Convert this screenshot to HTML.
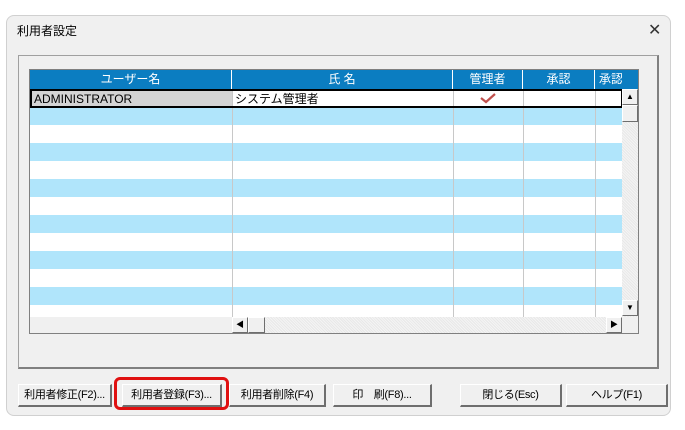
<!DOCTYPE html>
<html><head><meta charset="utf-8"><style>
*{box-sizing:border-box;margin:0;padding:0}
body{width:685px;height:430px;background:#fff;position:relative;overflow:hidden;font-family:"Liberation Sans","Noto Sans CJK JP",sans-serif;font-size:12px;color:#000}
.abs{position:absolute}
.win{left:6px;top:15px;width:665px;height:401px;background:#f0f0f0;border:1px solid #d0d0d0;border-radius:8px}
.panel{left:18px;top:55px;width:641px;height:314px;border-top:1px solid #a0a0a0;border-left:1px solid #a0a0a0;border-right:2px solid #808080;border-bottom:2px solid #808080;background:#f0f0f0}
.grid{left:29px;top:69px;width:610px;height:265px;border:1px solid #808080;background:#f0f0f0;overflow:hidden}
.hdr{top:0;height:19px;background:#0b7dc1;color:#fff;text-align:center;line-height:19px;border-right:1px solid #fff;font-size:12px;overflow:hidden;white-space:nowrap}
.row{left:0;width:592px;height:18px}
.vl{width:1px;background:#c8c8c8;top:19px;height:228px}
.btn{top:384px;height:23px;background:#f0f0f0;border-top:1px solid #fff;border-left:1px solid #fff;border-right:2px solid #6e6e6e;border-bottom:2px solid #6e6e6e;text-align:center;line-height:20px;font-size:11px;white-space:nowrap;overflow:hidden;letter-spacing:-0.3px}
.sb{background:#f0f0f0;border-top:1px solid #fff;border-left:1px solid #fff;border-right:1px solid #6e6e6e;border-bottom:1px solid #6e6e6e}
</style></head><body>
<div class="abs win"></div>
<div class="abs" style="left:17px;top:22px;font-size:12px">利用者設定</div>
<div class="abs" style="left:648px;top:20px;font-size:16px;color:#333">✕</div>
<div class="abs panel"></div>
<div class="abs grid">
  <div class="abs hdr" style="left:0;width:202px">ユーザー名</div>
  <div class="abs hdr" style="left:202px;width:221px">氏 名</div>
  <div class="abs hdr" style="left:423px;width:70px">管理者</div>
  <div class="abs hdr" style="left:493px;width:72px">承認</div>
  <div class="abs hdr" style="left:565px;width:27px;text-align:left;padding-left:4px;border-right:none">承認</div>
  <div class="abs" style="left:592px;top:0;width:18px;height:19px;background:#0b7dc1"></div>
  <div class="abs" style="left:0;top:19px;width:592px;height:228px;background:#fff"></div>
  <div class="abs row" style="top:37px;background:#b0e5fb"></div>
  <div class="abs row" style="top:73px;background:#b0e5fb"></div>
  <div class="abs row" style="top:109px;background:#b0e5fb"></div>
  <div class="abs row" style="top:145px;background:#b0e5fb"></div>
  <div class="abs row" style="top:181px;background:#b0e5fb"></div>
  <div class="abs row" style="top:217px;background:#b0e5fb"></div>
  <div class="abs" style="left:0;top:19px;width:202px;height:18px;background:#d4d4d4"></div>
  <div class="abs vl" style="left:202px"></div>
  <div class="abs vl" style="left:423px"></div>
  <div class="abs vl" style="left:493px"></div>
  <div class="abs vl" style="left:565px"></div>
  <div class="abs" style="left:0;top:19px;width:593px;height:19px;border:2px solid #000"></div>
  <div class="abs" style="left:4px;top:21px;line-height:16px">ADMINISTRATOR</div>
  <div class="abs" style="left:205px;top:21px;line-height:16px">システム管理者</div>
  <svg class="abs" style="left:450px;top:22px" width="16" height="12"><path d="M1 6 L6 10 L15 2" stroke="#c0504d" stroke-width="2.2" fill="none"/></svg>
  <div class="abs" style="left:592px;top:19px;width:17px;height:228px;background:repeating-linear-gradient(45deg,#e8e8e8 0 1px,#f4f4f4 1px 2px)"></div>
  <div class="abs sb" style="left:592px;top:19px;width:16px;height:16px;font-size:8px;text-align:center;line-height:14px">▲</div>
  <div class="abs sb" style="left:592px;top:35px;width:16px;height:17px"></div>
  <div class="abs sb" style="left:592px;top:230px;width:16px;height:16px;font-size:8px;text-align:center;line-height:14px">▼</div>
  <div class="abs" style="left:202px;top:247px;width:390px;height:16px;background:repeating-linear-gradient(45deg,#e8e8e8 0 1px,#f4f4f4 1px 2px)"></div>
  <div class="abs sb" style="left:202px;top:247px;width:16px;height:16px;font-size:8px;text-align:center;line-height:14px">◀</div>
  <div class="abs sb" style="left:218px;top:247px;width:17px;height:16px"></div>
  <div class="abs sb" style="left:576px;top:247px;width:16px;height:16px;font-size:8px;text-align:center;line-height:14px">▶</div>
</div>
<div class="abs btn" style="left:18px;width:94px">利用者修正(F2)...</div>
<div class="abs btn" style="left:122px;width:100px">利用者登録(F3)...</div>
<div class="abs" style="left:114px;top:377px;width:115px;height:33px;border:3px solid #e01010;border-radius:6px"></div>
<div class="abs btn" style="left:229px;width:97px">利用者削除(F4)</div>
<div class="abs btn" style="left:333px;width:99px">印　刷(F8)...</div>
<div class="abs btn" style="left:460px;width:102px">閉じる(Esc)</div>
<div class="abs btn" style="left:566px;width:102px">ヘルプ(F1)</div>
</body></html>
